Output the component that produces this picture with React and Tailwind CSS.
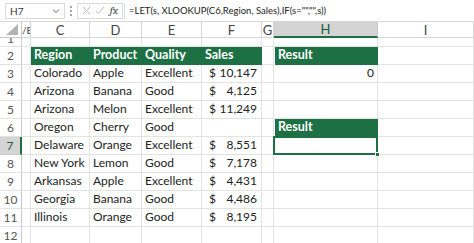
import React from "react";

const rows = [
  ["Colorado", "Apple", "Excellent", "10,147"],
  ["Arizona", "Banana", "Good", "4,125"],
  ["Arizona", "Melon", "Excellent", "11,249"],
  ["Oregon", "Cherry", "Good", ""],
  ["Delaware", "Orange", "Excellent", "8,551"],
  ["New York", "Lemon", "Good", "7,178"],
  ["Arkansas", "Apple", "Excellent", "4,431"],
  ["Georgia", "Banana", "Good", "4,486"],
  ["Illinois", "Orange", "Good", "8,195"],
  ["", "", "", ""],
];

const cols = ["/E", "C", "D", "E", "F", "G", "H", "I"];
const font = { fontFamily: "Lato, 'Open Sans', sans-serif" };

function Cell({ children, className = "" }) {
  return (
    <div
      className={`border-r border-b border-[#e3e3e3] flex items-end pb-[2px] px-[3px] overflow-hidden whitespace-nowrap text-[12px] leading-[15px] text-[#222] ${className}`}
    >
      {children}
    </div>
  );
}

function Green({ children, className = "" }) {
  return (
    <div
      className={`bg-[#1d7044] border-b border-[#1d7044] flex items-end pb-[2px] px-[3px] overflow-hidden whitespace-nowrap text-[12.5px] leading-[15px] font-bold text-white ${className}`}
    >
      {children}
    </div>
  );
}

function RowHead({ n, active }) {
  return (
    <div
      className={`flex items-center justify-center text-[12px] leading-[14px] border-b ${
        active
          ? "bg-[#d4d4d4] text-[#1d5c38] border-r-2 border-r-[#1d7044] border-b-[#c8c8c8]"
          : "bg-white text-[#555] border-r border-r-[#c8c8c8] border-b-[#e3e3e3]"
      }`}
    >
      {n}
    </div>
  );
}

export default function App() {
  return (
    <div className="w-[474px] h-[243px] overflow-hidden bg-white" style={font}>
      {/* formula bar */}
      <div className="h-[22px] flex items-center border-b border-[#d6d6d6] text-[10px] text-[#333]">
        <div className="ml-[5px] w-[60px] h-[16px] border border-[#dcdcdc] flex items-center justify-between px-[4px]">
          <span className="leading-[12px]">H7</span>
          <svg width="8" height="6" viewBox="0 0 8 6">
            <path d="M1 1.5 L4 4.5 L7 1.5" fill="none" stroke="#666" strokeWidth="1" />
          </svg>
        </div>
        <div className="w-[12px] flex flex-col items-center gap-[2px]">
          <span className="w-[2px] h-[2px] bg-[#888] rounded-full" />
          <span className="w-[2px] h-[2px] bg-[#888] rounded-full" />
          <span className="w-[2px] h-[2px] bg-[#888] rounded-full" />
        </div>
        <div className="w-[46px] h-[16px] border border-[#dcdcdc] flex items-center justify-around px-[2px]">
          <svg width="9" height="9" viewBox="0 0 9 9">
            <path d="M1 1 L8 8 M8 1 L1 8" stroke="#bbb" strokeWidth="1" />
          </svg>
          <svg width="10" height="9" viewBox="0 0 10 9">
            <path d="M1 5 L3.5 7.5 L9 1" fill="none" stroke="#bbb" strokeWidth="1" />
          </svg>
          <span className="italic font-serif text-[11px] leading-[12px] text-[#444]">fx</span>
        </div>
        <div className="flex-1 h-[16px] ml-px border-l border-[#dcdcdc] flex items-center pl-[4px] text-[9.5px] leading-[12px] text-[#222] whitespace-nowrap">
          =LET(s, XLOOKUP(C6,Region, Sales),IF(s="","",s))
        </div>
      </div>

      {/* grid */}
      <div className="grid grid-cols-[22px_9px_59px_52px_60px_60px_12px_104px_96px] grid-rows-[16px_9px_repeat(11,18px)]">
        {/* header row */}
        <div className="relative bg-white border-r border-b border-[#c8c8c8]">
          <svg className="absolute right-[3px] bottom-[2px]" width="12" height="11" viewBox="0 0 12 11">
            <path d="M12 0 L12 11 L0 11 Z" fill="#b3b3b3" />
          </svg>
        </div>
        {cols.map((c) => (
          <div
            key={c}
            className={`flex items-center overflow-hidden leading-[14px] whitespace-nowrap ${
              c === "H"
                ? "bg-[#d4d4d4] text-[#1d5c38] border-b-2 border-b-[#1d7044] border-r border-r-[#c8c8c8]"
                : "bg-white text-[#444] border-b border-r border-[#d6d6d6]"
            } ${c === "/E" ? "text-[10px] justify-start" : "text-[13px] justify-center"}`}
          >
            {c}
          </div>
        ))}

        {/* row 1 (partially scrolled) */}
        <div className="relative overflow-hidden bg-white border-r border-b border-r-[#c8c8c8] border-b-[#e3e3e3]">
          <span className="absolute left-0 right-0 -top-[6px] text-center text-[12px] leading-[14px] text-[#555]">1</span>
        </div>
        {cols.map((c) => (
          <div key={c} className="border-r border-b border-[#e3e3e3]" />
        ))}

        {/* row 2 */}
        <RowHead n={2} />
        <Cell />
        <Green>Region</Green>
        <Green>Product</Green>
        <Green>Quality</Green>
        <Green>Sales</Green>
        <Cell />
        <Green className="ml-px">Result</Green>
        <Cell />

        {rows.map((r, i) => {
          const n = i + 3;
          return (
            <React.Fragment key={n}>
              <RowHead n={n} active={n === 7} />
              <Cell />
              <Cell>{r[0]}</Cell>
              <Cell>{r[1]}</Cell>
              <Cell>{r[2]}</Cell>
              <Cell className="justify-between pl-[7px] pr-[4px]">
                {r[3] && (
                  <>
                    <span>$</span>
                    <span>{r[3]}</span>
                  </>
                )}
              </Cell>
              <Cell />
              {n === 6 ? (
                <Green className="ml-px">Result</Green>
              ) : n === 7 ? (
                <div className="relative border-r border-b border-[#e3e3e3]">
                  <div className="absolute -top-px -left-px -right-px -bottom-px border-2 border-[#1d7044]" />
                  <div className="absolute -right-[3px] -bottom-[3px] w-[5px] h-[5px] bg-[#1d7044] border border-white" />
                </div>
              ) : (
                <Cell className="justify-end">{n === 3 ? "0" : ""}</Cell>
              )}
              <Cell />
            </React.Fragment>
          );
        })}
      </div>
    </div>
  );
}
